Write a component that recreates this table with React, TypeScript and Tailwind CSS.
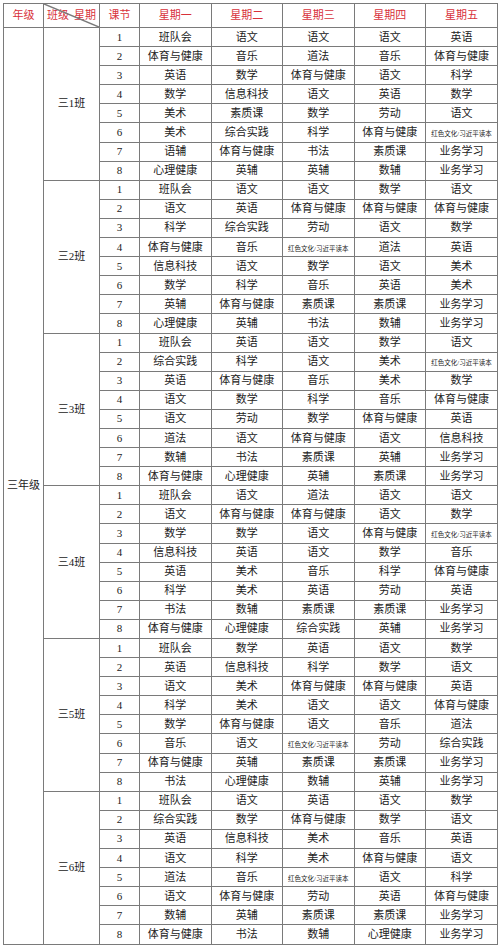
import React from 'react';

const RED = '红色文化/习近平读本';

const schedule: { name: string; rows: string[][] }[] = [
  {
    name: '三1班',
    rows: [
      ['班队会', '语文', '语文', '语文', '英语'],
      ['体育与健康', '音乐', '道法', '音乐', '体育与健康'],
      ['英语', '数学', '体育与健康', '语文', '科学'],
      ['数学', '信息科技', '语文', '英语', '数学'],
      ['美术', '素质课', '数学', '劳动', '语文'],
      ['美术', '综合实践', '科学', '体育与健康', RED],
      ['语辅', '体育与健康', '书法', '素质课', '业务学习'],
      ['心理健康', '英辅', '英辅', '数辅', '业务学习'],
    ],
  },
  {
    name: '三2班',
    rows: [
      ['班队会', '语文', '语文', '数学', '语文'],
      ['语文', '英语', '体育与健康', '体育与健康', '体育与健康'],
      ['科学', '综合实践', '劳动', '语文', '数学'],
      ['体育与健康', '音乐', RED, '道法', '英语'],
      ['信息科技', '语文', '数学', '语文', '美术'],
      ['数学', '科学', '音乐', '英语', '美术'],
      ['英辅', '体育与健康', '素质课', '素质课', '业务学习'],
      ['心理健康', '英辅', '书法', '数辅', '业务学习'],
    ],
  },
  {
    name: '三3班',
    rows: [
      ['班队会', '英语', '语文', '数学', '语文'],
      ['综合实践', '科学', '语文', '美术', RED],
      ['英语', '体育与健康', '音乐', '美术', '数学'],
      ['语文', '数学', '科学', '音乐', '体育与健康'],
      ['语文', '劳动', '数学', '体育与健康', '英语'],
      ['道法', '语文', '体育与健康', '语文', '信息科技'],
      ['数辅', '书法', '素质课', '英辅', '业务学习'],
      ['体育与健康', '心理健康', '英辅', '素质课', '业务学习'],
    ],
  },
  {
    name: '三4班',
    rows: [
      ['班队会', '语文', '道法', '语文', '语文'],
      ['语文', '体育与健康', '体育与健康', '语文', '数学'],
      ['数学', '数学', '语文', '体育与健康', RED],
      ['信息科技', '英语', '语文', '数学', '音乐'],
      ['英语', '美术', '音乐', '科学', '体育与健康'],
      ['科学', '美术', '英语', '劳动', '英语'],
      ['书法', '数辅', '素质课', '素质课', '业务学习'],
      ['体育与健康', '心理健康', '综合实践', '英辅', '业务学习'],
    ],
  },
  {
    name: '三5班',
    rows: [
      ['班队会', '数学', '英语', '语文', '数学'],
      ['英语', '信息科技', '科学', '数学', '语文'],
      ['语文', '美术', '体育与健康', '体育与健康', '英语'],
      ['科学', '美术', '语文', '语文', '体育与健康'],
      ['数学', '体育与健康', '语文', '音乐', '道法'],
      ['音乐', '语文', RED, '劳动', '综合实践'],
      ['体育与健康', '英辅', '素质课', '素质课', '业务学习'],
      ['书法', '心理健康', '数辅', '英辅', '业务学习'],
    ],
  },
  {
    name: '三6班',
    rows: [
      ['班队会', '语文', '英语', '语文', '数学'],
      ['综合实践', '数学', '体育与健康', '数学', '语文'],
      ['英语', '信息科技', '美术', '音乐', '英语'],
      ['语文', '科学', '美术', '体育与健康', '语文'],
      ['道法', '音乐', RED, '语文', '科学'],
      ['语文', '体育与健康', '劳动', '英语', '体育与健康'],
      ['数辅', '英辅', '素质课', '素质课', '业务学习'],
      ['体育与健康', '书法', '数辅', '心理健康', '业务学习'],
    ],
  },
];

const days = ['星期一', '星期二', '星期三', '星期四', '星期五'];

const cell = 'border border-[#7a7a7a] text-center align-middle p-0';

export default function App() {
  return (
    <div
      className="w-[500px] h-[948px] bg-white pt-[3px] pl-[3px]"
      style={{ fontFamily: '"Liberation Serif", "Noto Sans CJK SC", serif' }}
    >
      <table className="table-fixed border-collapse w-[494px] text-[11px] leading-none text-[#222]">
        <colgroup>
          <col className="w-[40px]" />
          <col className="w-[56px]" />
          <col className="w-[40px]" />
          <col className="w-[71.5px]" />
          <col className="w-[71.5px]" />
          <col className="w-[71.5px]" />
          <col className="w-[71.5px]" />
          <col className="w-[72px]" />
        </colgroup>
        <thead>
          <tr className="h-[24px] text-[#d8313b]">
            <th className={`${cell} font-normal`}>年级</th>
            <th className={`${cell} font-normal relative`}>
              <svg className="absolute inset-0 w-full h-full" preserveAspectRatio="none" viewBox="0 0 100 100">
                <line x1="0" y1="0" x2="100" y2="100" stroke="#7a7a7a" strokeWidth="1.5" vectorEffect="non-scaling-stroke" />
              </svg>
              <div className="flex justify-between px-[3px]">
                <span>班级</span>
                <span>星期</span>
              </div>
            </th>
            <th className={`${cell} font-normal`}>课节</th>
            {days.map((d) => (
              <th key={d} className={`${cell} font-normal`}>
                {d}
              </th>
            ))}
          </tr>
        </thead>
        <tbody>
          {schedule.map((cls, ci) =>
            cls.rows.map((row, ri) => (
              <tr key={`${ci}-${ri}`} className="h-[19.1px]">
                {ci === 0 && ri === 0 && (
                  <td rowSpan={48} className={cell}>
                    三年级
                  </td>
                )}
                {ri === 0 && (
                  <td rowSpan={8} className={cell}>
                    {cls.name}
                  </td>
                )}
                <td className={cell}>{ri + 1}</td>
                {row.map((s, si) => (
                  <td key={si} className={cell}>
                    {s === RED ? <span className="text-[6.5px] whitespace-nowrap">{s}</span> : s}
                  </td>
                ))}
              </tr>
            ))
          )}
        </tbody>
      </table>
    </div>
  );
}
